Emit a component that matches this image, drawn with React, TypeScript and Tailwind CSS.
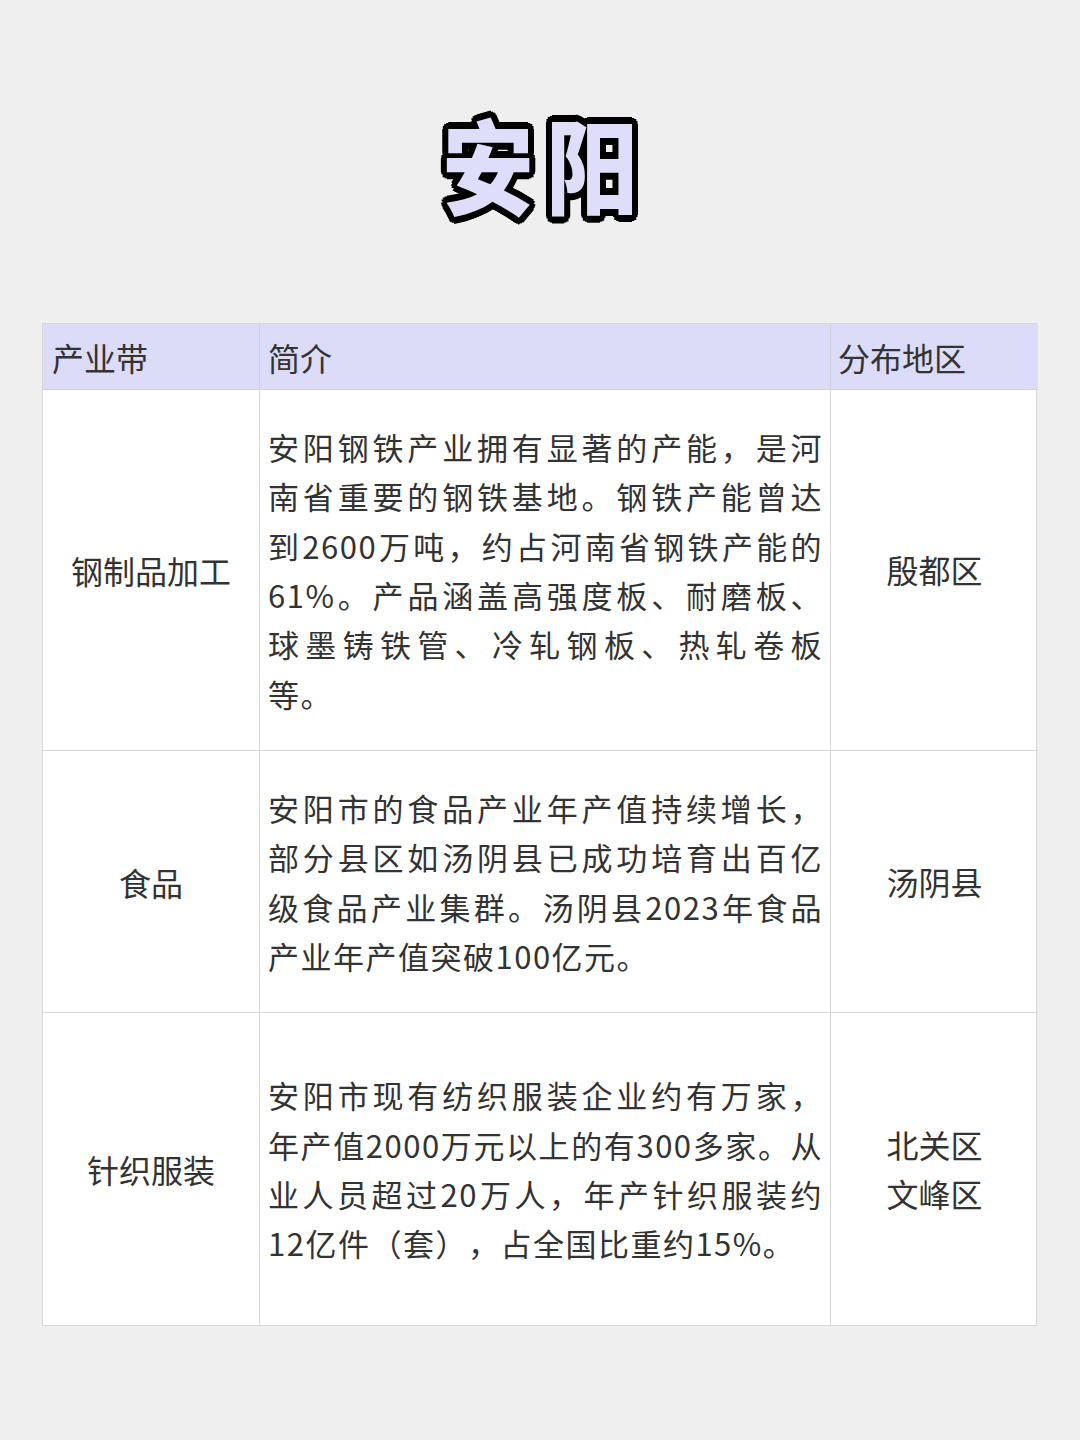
import React from "react";

const font = { fontFamily: '"Noto Sans CJK SC", "Noto Sans", sans-serif' };

function Lines({ lines }: { lines: string[] }) {
  return (
    <div className="text-[31px] leading-[49.3px] tracking-[1.5px] text-[#333333]">
      {lines.map((l, i) => (
        <div
          key={i}
          className={
            i < lines.length - 1
              ? "text-justify [text-align-last:justify] whitespace-nowrap"
              : "text-left whitespace-nowrap"
          }
        >
          {l}
        </div>
      ))}
    </div>
  );
}

const rows = [
  {
    name: "钢制品加工",
    h: "h-[361px]",
    lines: [
      "安阳钢铁产业拥有显著的产能，是河",
      "南省重要的钢铁基地。钢铁产能曾达",
      "到2600万吨，约占河南省钢铁产能的",
      "61%。产品涵盖高强度板、耐磨板、",
      "球墨铸铁管、冷轧钢板、热轧卷板",
      "等。",
    ],
    area: ["殷都区"],
  },
  {
    name: "食品",
    h: "h-[262px]",
    lines: [
      "安阳市的食品产业年产值持续增长，",
      "部分县区如汤阴县已成功培育出百亿",
      "级食品产业集群。汤阴县2023年食品",
      "产业年产值突破100亿元。",
    ],
    area: ["汤阴县"],
  },
  {
    name: "针织服装",
    h: "h-[312px]",
    lines: [
      "安阳市现有纺织服装企业约有万家，",
      "年产值2000万元以上的有300多家。从",
      "业人员超过20万人，年产针织服装约",
      "12亿件（套），占全国比重约15%。",
    ],
    area: ["北关区", "文峰区"],
  },
];

export default function App() {
  return (
    <div
      className="min-h-[1440px] w-[1080px] bg-[#efefef] [text-spacing-trim:space-all]"
      style={font}
    >
      <div className="flex justify-center pt-[116px]">
        <div className="text-[92px] leading-none font-black tracking-[12px] pl-[12px] text-[#dedefa] scale-y-[1.12] [text-shadow:6px_0_0_#000,5.5px_2.3px_0_#000,4.2px_4.2px_0_#000,2.3px_5.5px_0_#000,0_6px_0_#000,-2.3px_5.5px_0_#000,-4.2px_4.2px_0_#000,-5.5px_2.3px_0_#000,-6px_0_0_#000,-5.5px_-2.3px_0_#000,-4.2px_-4.2px_0_#000,-2.3px_-5.5px_0_#000,0_-6px_0_#000,2.3px_-5.5px_0_#000,4.2px_-4.2px_0_#000,5.5px_-2.3px_0_#000,3px_0_0_#000,2.1px_2.1px_0_#000,0_3px_0_#000,-2.1px_2.1px_0_#000,-3px_0_0_#000,-2.1px_-2.1px_0_#000,0_-3px_0_#000,2.1px_-2.1px_0_#000]">
          安阳
        </div>
      </div>

      <div className="ml-[42px] mt-[115px] w-[995px] bg-white">
        <div className="grid grid-cols-[217px_571px_207px] border border-[#d6d6dc]">
          <div className="h-[66px] bg-[#dcdcf9] border-r border-b border-[#d0d0e0] flex items-center pl-[9px] text-[32px] text-[#333333]">
            产业带
          </div>
          <div className="h-[66px] bg-[#dcdcf9] border-r border-b border-[#d0d0e0] flex items-center pl-[8px] text-[32px] text-[#333333]">
            简介
          </div>
          <div className="h-[66px] bg-[#dcdcf9] border-b border-[#d0d0e0] flex items-center pl-[7px] text-[32px] text-[#333333]">
            分布地区
          </div>
          {rows.map((r, ri) => (
            <React.Fragment key={ri}>
              <div
                className={`${r.h} border-r border-[#d6d6dc] ${
                  ri < rows.length - 1 ? "border-b" : ""
                } flex items-center justify-center text-[32px] text-[#333333]`}
              >
                {r.name}
              </div>
              <div
                className={`${r.h} border-r border-[#d6d6dc] ${
                  ri < rows.length - 1 ? "border-b" : ""
                } flex items-center pl-[8px] pr-[7px]`}
              >
                <div className="w-full">
                  <Lines lines={r.lines} />
                </div>
              </div>
              <div
                className={`${r.h} border-[#d6d6dc] ${
                  ri < rows.length - 1 ? "border-b" : ""
                } flex flex-col items-center justify-center text-[32px] leading-[49.3px] text-[#333333]`}
              >
                {r.area.map((a) => (
                  <div key={a}>{a}</div>
                ))}
              </div>
            </React.Fragment>
          ))}
        </div>
      </div>
    </div>
  );
}
